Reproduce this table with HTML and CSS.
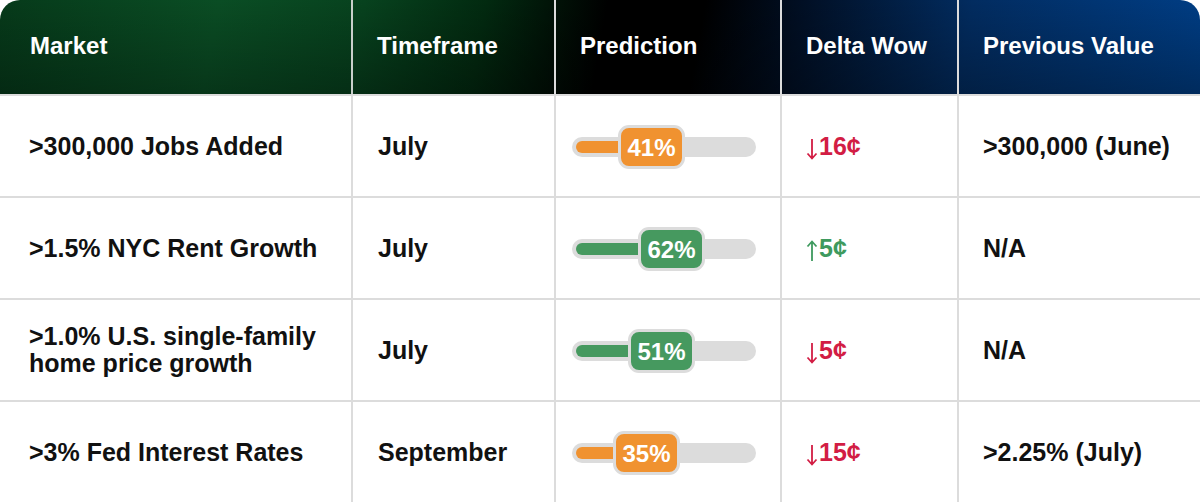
FILE: index.html
```html
<!DOCTYPE html>
<html lang="en">
<head>
<meta charset="utf-8">
<title>Markets</title>
<link rel="stylesheet" href="styles.css">
</head>
<body>
<div class="table">
  <div class="head">
    <div class="cell c1">Market</div>
    <div class="cell c2">Timeframe</div>
    <div class="cell c3">Prediction</div>
    <div class="cell c4">Delta Wow</div>
    <div class="cell c5">Previous Value</div>
  </div>
  <div class="row">
    <div class="cell c1">&gt;300,000 Jobs Added</div>
    <div class="cell c2">July</div>
    <div class="cell c3"><div class="track orange"><div class="fill" style="width:60px"></div><div class="pill" style="left:46px">41%</div></div></div>
    <div class="cell c4 down"><span><svg class="arr" viewBox="0 0 12 22"><path d="M6 1V20M1.5 15.5L6 20.5L10.5 15.5"/></svg>16¢</span></div>
    <div class="cell c5">&gt;300,000 (June)</div>
  </div>
  <div class="row">
    <div class="cell c1">&gt;1.5% NYC Rent Growth</div>
    <div class="cell c2">July</div>
    <div class="cell c3"><div class="track green"><div class="fill" style="width:80px"></div><div class="pill" style="left:66px">62%</div></div></div>
    <div class="cell c4 up"><span><svg class="arr" viewBox="0 0 12 22"><path d="M6 21V2M1.5 6.5L6 1.5L10.5 6.5"/></svg>5¢</span></div>
    <div class="cell c5">N/A</div>
  </div>
  <div class="row">
    <div class="cell c1">&gt;1.0% U.S. single-family<br>home price growth</div>
    <div class="cell c2">July</div>
    <div class="cell c3"><div class="track green"><div class="fill" style="width:70px"></div><div class="pill" style="left:56px">51%</div></div></div>
    <div class="cell c4 down"><span><svg class="arr" viewBox="0 0 12 22"><path d="M6 1V20M1.5 15.5L6 20.5L10.5 15.5"/></svg>5¢</span></div>
    <div class="cell c5">N/A</div>
  </div>
  <div class="row last">
    <div class="cell c1">&gt;3% Fed Interest Rates</div>
    <div class="cell c2">September</div>
    <div class="cell c3"><div class="track orange"><div class="fill" style="width:55px"></div><div class="pill" style="left:41px">35%</div></div></div>
    <div class="cell c4 down"><span><svg class="arr" viewBox="0 0 12 22"><path d="M6 1V20M1.5 15.5L6 20.5L10.5 15.5"/></svg>15¢</span></div>
    <div class="cell c5">&gt;2.25% (July)</div>
  </div>
</div>
</body>
</html>
```
FILE: styles.css
```css
* { box-sizing: border-box; }
html, body { margin: 0; padding: 0; background: #fff; }
body {
  width: 1200px;
  height: 502px;
  overflow: hidden;
  font-family: "Liberation Sans", Arial, sans-serif;
  font-weight: 700;
  font-size: 25px;
  color: #111;
}
.table { width: 1200px; }
.head, .row {
  display: grid;
  grid-template-columns: 351px 201px 224px 175px 241px;
  column-gap: 2px;
}
.head {
  height: 96px;
  border-bottom: 2px solid #dcdcdc;
  border-radius: 20px 20px 0 0;
  background:
    linear-gradient(180deg, rgba(0,0,0,0) 0%, rgba(0,0,0,0.3) 100%),
    linear-gradient(100deg, #063a1a 0%, #0a4d24 18%, #07421e 30%, #022a10 40%, #000 50%, #000 58%, #010f24 66%, #022c60 80%, #003e86 100%);
  column-gap: 0;
  grid-template-columns: 353px 203px 226px 177px 241px;
}
.head .cell {
  color: #fff;
  font-size: 24px;
  height: 94px;
  display: flex;
  align-items: center;
  padding-left: 24px;
  padding-bottom: 2px;
}
.head .cell.c1 { padding-left: 30px; }
.head .c1, .head .c2, .head .c3, .head .c4 { border-right: 2px solid #dcdcdc; }
.head .c1 { border-right-color: #c9cfcb; }
.row {
  height: 102px;
  border-bottom: 2px solid #dcdcdc;
  background: #dcdcdc;
}
.row.last { border-bottom: none; height: 100px; }
.row .cell {
  background: #fff;
  display: flex;
  align-items: center;
  padding-left: 25px;
  line-height: 27px;
}
.row .cell.c1 { padding-left: 29px; }
.row .cell.c3 { padding-left: 16px; }
.row .cell.c4 { padding-left: 24px; }
.row .cell.c5 { padding-left: 24px; }
.down { color: #d21d44; }
.up { color: #3e9a5e; }
.arr {
  width: 12px;
  height: 22px;
  vertical-align: -5px;
  margin-right: 1px;
  fill: none;
  stroke: currentColor;
  stroke-width: 1.8;
}
.track {
  position: relative;
  width: 184px;
  height: 20px;
  border-radius: 10px;
  background: #dcdcdc;
  margin-top: 2px;
}
.fill {
  position: absolute;
  left: 4px;
  top: 4px;
  height: 12px;
  border-radius: 6px;
}
.pill {
  position: absolute;
  top: -12px;
  width: 67px;
  height: 44px;
  border: 3px solid #dcdcdc;
  border-radius: 11px;
  color: #fff;
  display: flex;
  align-items: center;
  justify-content: center;
  font-size: 24px;
}
.orange .fill, .orange .pill { background-color: #f09230; }
.green .fill, .green .pill { background-color: #46995f; }
```
